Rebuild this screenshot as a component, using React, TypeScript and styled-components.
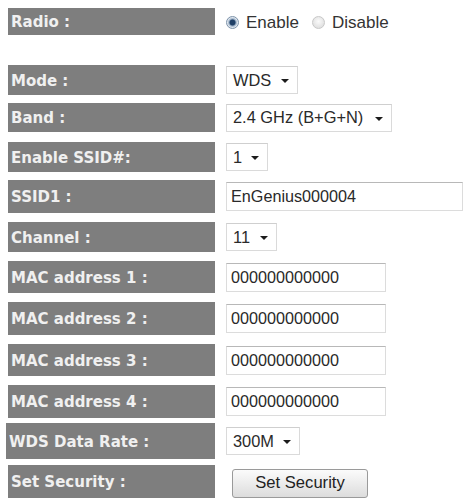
import styled, { createGlobalStyle } from "styled-components";

const GlobalStyle = createGlobalStyle`
  html, body {
    margin: 0;
    padding: 0;
    background: #ffffff;
  }
  body {
    width: 465px;
    height: 498px;
    overflow: hidden;
  }
`;

const Form = styled.div`
  display: flex;
  flex-direction: column;
  padding-top: 8px;
`;

const Row = styled.div<{ $h: number; $gap: number; $shift?: number }>`
  display: flex;
  align-items: center;
  height: ${({ $h }) => $h}px;
  margin-top: ${({ $gap }) => $gap}px;
  padding-left: ${({ $shift }) => 8 - ($shift || 0)}px;
`;

const Label = styled.div<{ $shift?: number }>`
  box-sizing: border-box;
  width: ${({ $shift }) => 207 + ($shift || 0)}px;
  height: 100%;
  background: #7e7e7e;
  color: #f0f0f0;
  font-family: "DejaVu Sans", Verdana, sans-serif;
  font-weight: bold;
  font-size: 15px;
  display: flex;
  align-items: center;
  padding-left: 3px;
  padding-top: 1px;
  white-space: nowrap;
`;

const Cell = styled.div`
  display: flex;
  align-items: center;
  margin-left: 11px;
  font-family: "Liberation Sans", Arial, sans-serif;
  font-size: 16.4px;
  color: #2e2e2e;
`;

const RadioGroup = styled.div`
  display: flex;
  align-items: center;
  padding-top: 2px;
  font-size: 17px;
`;

const RadioDot = styled.span<{ $on?: boolean }>`
  box-sizing: border-box;
  width: 13px;
  height: 13px;
  border-radius: 50%;
  border: 1px solid ${({ $on }) => ($on ? "#7d93aa" : "#c8c8c8")};
  background: ${({ $on }) =>
    $on
      ? "radial-gradient(circle, #1f3f66 0 2.6px, #8fa6bf 3.4px, #dfe6ee 5px)"
      : "radial-gradient(circle at 50% 40%, #fafafa 0, #e2e2e2 70%)"};
  margin-right: 7px;
`;

const RadioText = styled.span`
  margin-right: 13px;
  color: #333;
`;

const Select = styled.div<{ $w: number }>`
  box-sizing: border-box;
  width: ${({ $w }) => $w}px;
  height: 28px;
  border: 1px solid #dadada;
  border-top-color: #cfcfcf;
  background: #fff;
  display: flex;
  align-items: center;
  justify-content: space-between;
  padding: 0 8px 0 6px;
  color: #2a2a2a;
`;

const Arrow = styled.span`
  width: 0;
  height: 0;
  border-left: 4px solid transparent;
  border-right: 4px solid transparent;
  border-top: 4.5px solid #1c1c1c;
  margin-top: 2px;
`;

const TextInput = styled.input<{ $w: number }>`
  box-sizing: border-box;
  width: ${({ $w }) => $w}px;
  height: 29px;
  border: 1px solid #dcdcdc;
  border-top: 1px solid #b8b8b8;
  background: #fff;
  padding: 0 0 0 4px;
  font-family: "Liberation Sans", Arial, sans-serif;
  font-size: 16.2px;
  color: #2a2a2a;
  outline: none;
`;

const Button = styled.button`
  box-sizing: border-box;
  width: 136px;
  height: 29px;
  margin-left: 6px;
  margin-top: 3px;
  border: 1px solid #9a9a9a;
  border-radius: 3px;
  background: linear-gradient(#fbfbfb, #ececec 50%, #dcdcdc);
  font-family: "Liberation Sans", Arial, sans-serif;
  font-size: 16.6px;
  color: #222;
  padding: 0;
`;

const Dropdown = ({ value, w }: { value: string; w: number }) => (
  <Select $w={w}>
    <span>{value}</span>
    <Arrow />
  </Select>
);

const macs = [
  { n: 1, h: 32, gap: 9 },
  { n: 2, h: 33, gap: 9 },
  { n: 3, h: 32, gap: 9 },
  { n: 4, h: 33, gap: 9 },
];

export default function App() {
  return (
    <>
      <GlobalStyle />
      <Form>
        <Row $h={27} $gap={0}>
          <Label>Radio :</Label>
          <Cell>
            <RadioGroup>
              <RadioDot $on />
              <RadioText>Enable</RadioText>
              <RadioDot />
              <RadioText>Disable</RadioText>
            </RadioGroup>
          </Cell>
        </Row>
        <Row $h={30} $gap={30}>
          <Label>Mode :</Label>
          <Cell>
            <Dropdown value="WDS" w={72} />
          </Cell>
        </Row>
        <Row $h={29} $gap={8}>
          <Label>Band :</Label>
          <Cell>
            <Dropdown value="2.4 GHz (B+G+N)" w={166} />
          </Cell>
        </Row>
        <Row $h={30} $gap={10}>
          <Label>Enable SSID#:</Label>
          <Cell>
            <Dropdown value="1" w={42} />
          </Cell>
        </Row>
        <Row $h={33} $gap={8}>
          <Label>SSID1 :</Label>
          <Cell>
            <TextInput $w={237} value="EnGenius000004" readOnly />
          </Cell>
        </Row>
        <Row $h={30} $gap={9}>
          <Label>Channel :</Label>
          <Cell>
            <Dropdown value="11" w={51} />
          </Cell>
        </Row>
        {macs.map((m) => (
          <Row key={m.n} $h={m.h} $gap={m.gap}>
            <Label>MAC address {m.n} :</Label>
            <Cell>
              <TextInput $w={160} value="000000000000" readOnly />
            </Cell>
          </Row>
        ))}
        <Row $h={36} $gap={5} $shift={2}>
          <Label $shift={2}>WDS Data Rate :</Label>
          <Cell>
            <Dropdown value="300M" w={74} />
          </Cell>
        </Row>
        <Row $h={33} $gap={6}>
          <Label>Set Security :</Label>
          <Cell>
            <Button>Set Security</Button>
          </Cell>
        </Row>
      </Form>
    </>
  );
}
